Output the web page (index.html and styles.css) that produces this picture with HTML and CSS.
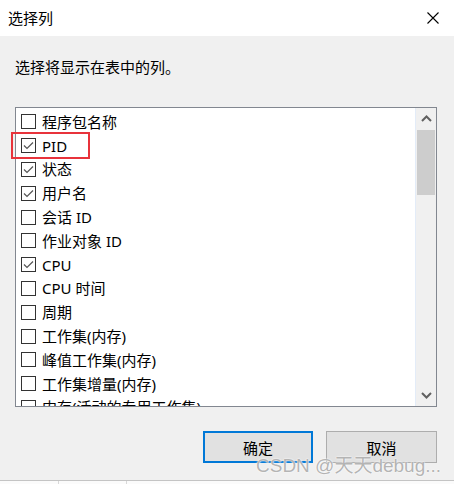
FILE: index.html
```html
<!DOCTYPE html>
<html lang="zh-CN">
<head>
<meta charset="utf-8">
<title>选择列</title>
<link rel="stylesheet" href="styles.css">
</head>
<body>
<div class="dialog">
  <div class="titlebar">
    <span class="title">选择列</span>
    <svg class="close" width="12" height="12" viewBox="0 0 12 12"><path d="M0.5 0.5 L11.5 11.5 M11.5 0.5 L0.5 11.5" stroke="#000" stroke-width="1.1" fill="none"/></svg>
  </div>
  <div class="prompt">选择将显示在表中的列。</div>
  <div class="listbox">
    <div class="items">
      <div class="row"><span class="cb"></span><span class="label">程序包名称</span></div>
      <div class="row"><span class="cb checked"><svg width="13" height="13" viewBox="0 0 13 13"><path d="M2 6.5 L5 9.5 L11 3.5" stroke="#555" stroke-width="1.2" fill="none"/></svg></span><span class="label">PID</span></div>
      <div class="row"><span class="cb checked"><svg width="13" height="13" viewBox="0 0 13 13"><path d="M2 6.5 L5 9.5 L11 3.5" stroke="#555" stroke-width="1.2" fill="none"/></svg></span><span class="label">状态</span></div>
      <div class="row"><span class="cb checked"><svg width="13" height="13" viewBox="0 0 13 13"><path d="M2 6.5 L5 9.5 L11 3.5" stroke="#555" stroke-width="1.2" fill="none"/></svg></span><span class="label">用户名</span></div>
      <div class="row"><span class="cb"></span><span class="label">会话 ID</span></div>
      <div class="row"><span class="cb"></span><span class="label">作业对象 ID</span></div>
      <div class="row"><span class="cb checked"><svg width="13" height="13" viewBox="0 0 13 13"><path d="M2 6.5 L5 9.5 L11 3.5" stroke="#555" stroke-width="1.2" fill="none"/></svg></span><span class="label">CPU</span></div>
      <div class="row"><span class="cb"></span><span class="label">CPU 时间</span></div>
      <div class="row"><span class="cb"></span><span class="label">周期</span></div>
      <div class="row"><span class="cb"></span><span class="label">工作集(内存)</span></div>
      <div class="row"><span class="cb"></span><span class="label">峰值工作集(内存)</span></div>
      <div class="row"><span class="cb"></span><span class="label">工作集增量(内存)</span></div>
      <div class="row"><span class="cb"></span><span class="label">内存(活动的专用工作集)</span></div>
    </div>
    <div class="scrollbar">
      <div class="arrow"><svg width="11" height="7" viewBox="0 0 11 7"><path d="M1 6 L5.5 1.5 L10 6" stroke="#606060" stroke-width="2" fill="none"/></svg></div>
      <div class="track"><div class="thumb"></div></div>
      <div class="arrow"><svg width="11" height="7" viewBox="0 0 11 7"><path d="M1 1 L5.5 5.5 L10 1" stroke="#606060" stroke-width="2" fill="none"/></svg></div>
    </div>
  </div>
  <div class="buttons">
    <div class="btn primary">确定</div>
    <div class="btn">取消</div>
  </div>
</div>
<div class="behind">
  <span class="sep"></span><span class="bt">18880</span><span class="sep"></span><span class="bt">正在运行</span>
</div>
<div class="highlight"></div>
<div class="watermark">CSDN @天天debug...</div>
</body>
</html>
```

FILE: styles.css
```css
html, body {
  margin: 0;
  padding: 0;
}
body {
  width: 454px;
  height: 484px;
  overflow: hidden;
  background: #f0f0f0;
  font-family: "Noto Sans", "Noto Sans CJK SC", sans-serif;
  color: #000;
  position: relative;
  display: flex;
  flex-direction: column;
}
.dialog {
  height: 481px;
  display: flex;
  flex-direction: column;
}
.titlebar {
  height: 36px;
  background: #fff;
  display: flex;
  align-items: center;
  justify-content: space-between;
  padding: 0 15px 0 8px;
  flex: none;
}
.title {
  font-size: 15px;
  line-height: 20px;
}
.prompt {
  margin-top: 21px;
  padding-left: 15px;
  font-size: 15px;
  line-height: 20px;
}
.listbox {
  margin: 30px 0 0 15px;
  width: 422px;
  height: 300px;
  box-sizing: border-box;
  border: 1px solid #828790;
  background: #fff;
  display: flex;
  overflow: hidden;
  flex: none;
}
.items {
  flex: 1;
  padding: 2px 0 0 5px;
  overflow: hidden;
}
.row {
  height: 23.8px;
  display: flex;
  align-items: center;
}
.cb {
  width: 15px;
  height: 15px;
  box-sizing: border-box;
  border: 1px solid #333;
  background: #fff;
  display: flex;
  align-items: center;
  justify-content: center;
  flex: none;
}
.cb svg {
  display: block;
}
.label {
  margin-left: 6px;
  font-size: 15px;
  line-height: 20px;
  white-space: nowrap;
}
.scrollbar {
  width: 20px;
  border-left: 1px solid #e3ecf8;
  background: #f0f0f0;
  display: flex;
  flex-direction: column;
}
.arrow {
  height: 21px;
  display: flex;
  align-items: center;
  justify-content: center;
  flex: none;
}
.track {
  flex: 1;
  padding: 1px 1px 0 1px;
}
.thumb {
  height: 65px;
  background: #cdcdcd;
}
.buttons {
  margin-top: 24px;
  padding-right: 17px;
  display: flex;
  justify-content: flex-end;
  gap: 13px;
}
.btn {
  width: 111px;
  height: 32px;
  box-sizing: border-box;
  border: 1px solid #adadad;
  background: #e1e1e1;
  font-size: 15px;
  display: flex;
  align-items: center;
  justify-content: center;
}
.btn.primary {
  width: 110px;
  border: 2px solid #0078d7;
}
.behind {
  height: 3px;
  border-top: 1px solid #c4c4c4;
  background: #fbfbfb;
  overflow: hidden;
  display: flex;
  align-items: flex-start;
  padding-left: 58px;
  font-size: 15px;
  line-height: 20px;
}
.behind .sep {
  width: 1px;
  height: 3px;
  background: #d8d8d8;
}
.behind .bt {
  margin: 0 12px;
}
.highlight {
  position: absolute;
  left: 11px;
  top: 132px;
  width: 79px;
  height: 27px;
  box-sizing: border-box;
  border: 2px solid #e8333b;
}
.watermark {
  position: absolute;
  left: 256px;
  top: 454px;
  font-family: "Liberation Sans", "Noto Sans CJK SC", sans-serif;
  font-size: 19px;
  line-height: 24px;
  color: rgba(160, 160, 160, 0.8);
  text-shadow: 0 0 1px #fff, 0 0 2px #fff;
  white-space: nowrap;
}
```
